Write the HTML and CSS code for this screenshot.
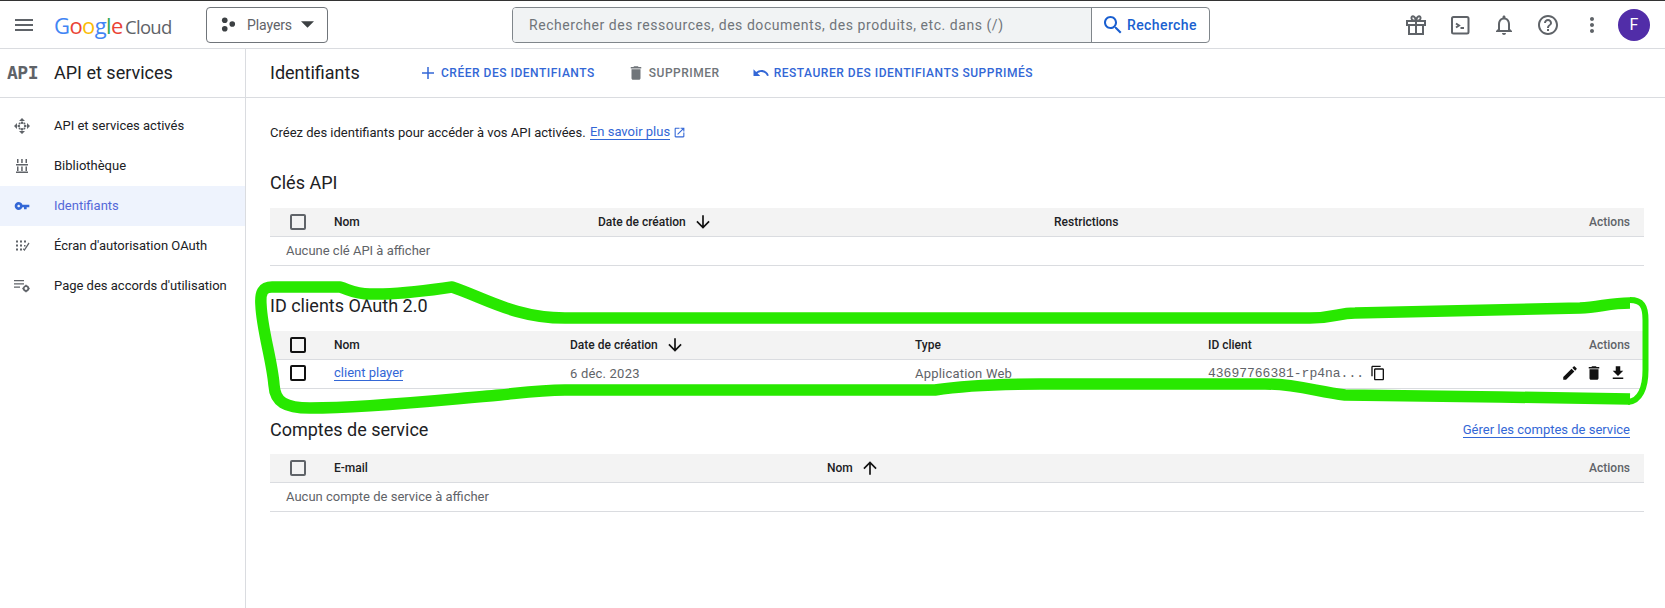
FILE: index.html
```html
<!DOCTYPE html>
<html lang="fr">
<head>
    <meta charset="UTF-8">
    <meta name="viewport" content="width=device-width, initial-scale=1.0">
    <title>Identifiants - API et services</title>
    <link rel="stylesheet" href="styles.css">
</head>
<body>
    <header class="topbar">
      <svg class="icon menu-icon" viewBox="0 0 24 24"><path d="M3 18h18v-2H3v2zm0-5h18v-2H3v2zm0-7v2h18V6H3z"/></svg>
      <div class="logo">
        <span class="logo-google"><span class="c-blue">G</span><span class="c-red">o</span><span class="c-yellow">o</span><span class="c-blue">g</span><span class="c-green">l</span><span class="c-red">e</span></span>
        <span class="logo-cloud">Cloud</span>
      </div>
      <button class="project">
        <svg class="project-dots" viewBox="0 0 16 16"><circle cx="4" cy="3.500" r="3"/><circle cx="12" cy="7.500" r="3"/><circle cx="4" cy="12.500" r="3"/></svg>
        <span>Players</span>
        <svg class="project-caret" viewBox="0 0 12 6"><path d="M0 0l6 6 6-6z"/></svg>
      </button>
      <div class="search">
        <div class="search-input">Rechercher des ressources, des documents, des produits, etc. dans (/)</div>
        <div class="search-btn">
          <svg class="icon" viewBox="0 0 24 24"><path d="M15.500 14h-.79l-.28-.27C15.410 12.590 16 11.110 16 9.500 16 5.910 13.090 3 9.500 3S3 5.910 3 9.500 5.910 16 9.500 16c1.610 0 3.090-.59 4.230-1.570l.27.28v.79l5 4.990L20.490 19l-4.990-5zm-6 0C7.010 14 5 11.990 5 9.500S7.010 5 9.500 5 14 7.010 14 9.500 11.990 14 9.500 14z"/></svg>
          <span>Recherche</span>
        </div>
      </div>
      <div class="top-icons">
        <svg class="icon stroke-icon" viewBox="0 0 24 24"><path d="M3 8h18v4H3zM5 12v9h14v-9M12 8v13M12 8C9 8 7 7 7.500 4.500 8 2.500 11 2.500 12 8c1-5.500 4-5.500 4.500-3.500C17 7 15 8 12 8z"/></svg>
        <svg class="icon stroke-icon" viewBox="0 0 24 24"><rect x="4" y="4" width="16.500" height="16.500" rx="1.500"/><path d="M8 10.500l3 2-3 2M12.500 15h3.500"/></svg>
        <svg class="icon" viewBox="0 0 24 24"><path d="M12 22c1.100 0 2-.9 2-2h-4c0 1.100.9 2 2 2zm6-6v-5c0-3.070-1.630-5.640-4.500-6.320V4c0-.83-.67-1.500-1.500-1.500s-1.500.67-1.500 1.500v.68C7.640 5.360 6 7.920 6 11v5l-2 2v1h16v-1l-2-2zm-2 1H8v-6c0-2.480 1.510-4.500 4-4.500s4 2.020 4 4.500v6z"/></svg>
        <svg class="icon" viewBox="0 0 24 24"><path d="M11 18h2v-2h-2v2zm1-16C6.480 2 2 6.480 2 12s4.480 10 10 10 10-4.480 10-10S17.520 2 12 2zm0 18c-4.410 0-8-3.590-8-8s3.590-8 8-8 8 3.590 8 8-3.590 8-8 8zm0-14c-2.210 0-4 1.790-4 4h2c0-1.100.9-2 2-2s2 .9 2 2c0 2-3 1.750-3 5h2c0-2.250 3-2.500 3-5 0-2.210-1.790-4-4-4z"/></svg>
        <svg class="icon" viewBox="0 0 24 24"><path d="M12 8c1.100 0 2-.9 2-2s-.9-2-2-2-2 .9-2 2 .9 2 2 2zm0 2c-1.100 0-2 .9-2 2s.9 2 2 2 2-.9 2-2-.9-2-2-2zm0 6c-1.100 0-2 .9-2 2s.9 2 2 2 2-.9 2-2-.9-2-2-2z"/></svg>
        <div class="avatar">F</div>
      </div>
    </header>

    <div class="layout">
      <aside class="sidebar">
        <div class="side-title">
          <span class="api-badge">API</span>
          <span>API et services</span>
        </div>
        <nav class="side-nav">
          <a class="side-item">
            <svg class="side-icon" viewBox="0 0 16 16"><path d="M8 0l3 3H5zM8 16l3-3H5zM0 8l3-3v6zM16 8l-3-3v6z"/><circle cx="8" cy="4.800" r="1.300"/><circle cx="8" cy="11.200" r="1.300"/><circle cx="4.800" cy="8" r="1.300"/><circle cx="11.200" cy="8" r="1.300"/><circle cx="5.600" cy="5.600" r="1"/><circle cx="10.400" cy="5.600" r="1"/><circle cx="5.600" cy="10.400" r="1"/><circle cx="10.400" cy="10.400" r="1"/></svg>
            <span>API et services activés</span>
          </a>
          <a class="side-item">
            <svg class="side-icon" viewBox="0 0 16 16"><path d="M3 1h1.500v4H3zM7.200 1h1.500v4H7.200zM11.500 1H13v4h-1.500zM2 6h12v1.500H2zM3 8.500h1.500V13H3zM7.200 8.500h1.500V13H7.200zM11.500 8.500H13V13h-1.500zM2 13.500h12V15H2z"/></svg>
            <span>Bibliothèque</span>
          </a>
          <a class="side-item active">
            <svg class="side-icon" viewBox="0 0 24 24"><path d="M12.650 10C11.830 7.670 9.610 6 7 6c-3.310 0-6 2.690-6 6s2.690 6 6 6c2.610 0 4.830-1.670 5.650-4H15v3h4v-3h4v-4H12.650zM7 14c-1.100 0-2-.9-2-2s.9-2 2-2 2 .9 2 2-.9 2-2 2z"/></svg>
            <span>Identifiants</span>
          </a>
          <a class="side-item">
            <svg class="side-icon" viewBox="0 0 16 16"><path d="M2 2.500h2v2H2zM6 2.500h2v2H6zM10 2.500h2v2h-2zM2 6.500h2v2H2zM6 6.500h2v2H6zM2 10.500h2v2H2zM6 10.500h2v2H6zM10 7h1.500v1.500H10z"/><path d="M14.500 4.500l1 1L10.500 13 8.800 11.200l1-1 .6.700z"/></svg>
            <span>Écran d'autorisation OAuth</span>
          </a>
          <a class="side-item">
            <svg class="side-icon" viewBox="0 0 16 16"><path d="M0 2h10v1.300H0zM0 5.200h10v1.300H0zM0 8.400h6v1.300H0z"/><circle class="gear" cx="12" cy="10.500" r="2.300"/><path d="M11.300 6.800h1.400v1.500h-1.400zM11.300 12.700h1.400v1.500h-1.400zM8.300 9.800h1.500v1.400H8.300zM14.200 9.800h1.500v1.400h-1.500z"/></svg>
            <span>Page des accords d'utilisation</span>
          </a>
        </nav>
      </aside>

      <main class="main">
        <div class="page-head">
          <h1>Identifiants</h1>
          <div class="actions">
            <a class="act blue act-create">
              <svg class="act-icon" viewBox="0 0 24 24"><path d="M20 13h-7v7h-2v-7H4v-2h7V4h2v7h7v2z"/></svg>
              <span>CRÉER DES IDENTIFIANTS</span>
            </a>
            <a class="act grey act-delete">
              <svg class="act-icon" viewBox="0 0 24 24"><path d="M6 19c0 1.100.9 2 2 2h8c1.100 0 2-.9 2-2V7H6v12zM19 4h-3.500l-1-1h-5l-1 1H5v2h14V4z"/></svg>
              <span>SUPPRIMER</span>
            </a>
            <a class="act blue">
              <svg class="act-icon" viewBox="0 0 24 24"><path d="M12.500 8c-2.650 0-5.050.99-6.900 2.600L2 7v9h9l-3.620-3.620c1.390-1.160 3.160-1.880 5.120-1.880 3.540 0 6.550 2.310 7.600 5.500l2.370-.78C21.080 11.030 17.150 8 12.500 8z"/></svg>
              <span>RESTAURER DES IDENTIFIANTS SUPPRIMÉS</span>
            </a>
          </div>
        </div>

        <div class="content">
          <p class="intro">Créez des identifiants pour accéder à vos API activées. <a class="link">En savoir plus</a>
            <svg class="ext-icon" viewBox="0 0 24 24"><path d="M19 19H5V5h7V3H5c-1.110 0-2 .9-2 2v14c0 1.100.89 2 2 2h14c1.100 0 2-.9 2-2v-7h-2v7zM14 3v2h3.590l-9.830 9.830 1.410 1.410L19 6.410V10h2V3h-7z"/></svg>
          </p>

          <section class="block block-keys">
            <h2>Clés API</h2>
            <div class="row head cols-keys">
              <span class="check check-grey"></span>
              <span>Nom</span>
              <span class="sort">Date de création
                <svg class="arrow" viewBox="0 0 24 24"><path d="M20 12l-1.410-1.410L13 16.170V4h-2v12.170l-5.580-5.590L4 12l8 8 8-8z"/></svg>
              </span>
              <span>Restrictions</span>
              <span class="col-actions">Actions</span>
            </div>
            <div class="row empty">Aucune clé API à afficher</div>
          </section>

          <section class="block">
            <h2>ID clients OAuth 2.0</h2>
            <div class="row head cols-oauth">
              <span class="check"></span>
              <span>Nom</span>
              <span class="sort">Date de création
                <svg class="arrow" viewBox="0 0 24 24"><path d="M20 12l-1.410-1.410L13 16.170V4h-2v12.170l-5.580-5.590L4 12l8 8 8-8z"/></svg>
              </span>
              <span>Type</span>
              <span>ID client</span>
              <span class="col-actions">Actions</span>
            </div>
            <div class="row cols-oauth data-row">
              <span class="check"></span>
              <a class="link cell-link">client player</a>
              <span>6 déc. 2023</span>
              <span>Application Web</span>
              <span class="client-id">43697766381-rp4na...
                <svg class="row-icon copy-icon" viewBox="0 0 24 24"><path d="M16 1H4c-1.100 0-2 .9-2 2v14h2V3h12V1zm3 4H8c-1.100 0-2 .9-2 2v14c0 1.100.9 2 2 2h11c1.100 0 2-.9 2-2V7c0-1.100-.9-2-2-2zm0 16H8V7h11v14z"/></svg>
              </span>
              <span class="row-actions">
                <svg class="row-icon" viewBox="0 0 24 24"><path d="M3 17.250V21h3.750L17.810 9.940l-3.750-3.750L3 17.250zM20.710 7.040c.39-.39.39-1.020 0-1.410l-2.340-2.340c-.39-.39-1.020-.39-1.410 0l-1.830 1.830 3.750 3.750 1.830-1.830z"/></svg>
                <svg class="row-icon" viewBox="0 0 24 24"><path d="M6 19c0 1.100.9 2 2 2h8c1.100 0 2-.9 2-2V7H6v12zM19 4h-3.500l-1-1h-5l-1 1H5v2h14V4z"/></svg>
                <svg class="row-icon" viewBox="0 0 24 24"><path d="M19 9h-4V3H9v6H5l7 7 7-7zM5 18v2h14v-2H5z"/></svg>
              </span>
            </div>
          </section>

          <section class="block">
            <div class="block-head">
              <h2>Comptes de service</h2>
              <a class="link">Gérer les comptes de service</a>
            </div>
            <div class="row head cols-service">
              <span class="check check-grey"></span>
              <span>E-mail</span>
              <span class="sort">Nom
                <svg class="arrow" viewBox="0 0 24 24"><path d="M4 12l1.410 1.410L11 7.830V20h2V7.830l5.580 5.590L20 12l-8-8-8 8z"/></svg>
              </span>
              <span class="col-actions">Actions</span>
            </div>
            <div class="row empty">Aucun compte de service à afficher</div>
          </section>
        </div>
      </main>
    </div>

    <!-- green marker scribbled over the screenshot -->
    <svg class="scribble" viewBox="0 0 1665 608">
      <path d="M1630 399 L1500 397 L1345 395 C1315 391 1295 384 1265 384 L1040 384 C1000 384 960 386 935 390 L565 390 C540 390 520 393 500 395 C440 400 370 408 310 408 C285 408 275 402 274 385 C272 360 262 330 261 305 C260 292 263 287 272 287 L340 287 C350 290 355 294 370 294 C400 295 430 290 452 287 C485 298 515 318 565 318 L1310 318 C1335 318 1338 313 1355 313 L1580 308 C1600 307 1610 303 1630 303"/>
      <path class="scribble-thin" d="M1630 300 C1642 300 1645.500 306 1645.500 320 L1645.500 370 C1645.500 388 1640 401 1628 402"/>
    </svg>
</body>
</html>
```

FILE: styles.css
```css
*{
  box-sizing: border-box;
}

html, body{
  margin: 0;
  height: 100%;
}

body{
  position: relative;
  height: 100vh;
  overflow: hidden;
  background-color: white;
  color: #202124;
  font-family: Roboto, "Liberation Sans", sans-serif;
  font-size: 13px;
}

svg{
  fill: currentColor;
  flex: none;
}

a{
  text-decoration: none;
}

h1, h2, p{
  margin: 0;
  font-weight: 400;
}

/* top bar */
.topbar{
  display: flex;
  align-items: center;
  height: 49px;
  border-top: 1px solid #333;
  border-bottom: 1px solid #dadce0;
  padding-left: 12px;
}

.icon{
  width: 24px;
  height: 24px;
  color: #5f6368;
}

.logo{
  display: flex;
  align-items: baseline;
  margin-left: 18px;
  width: 152px;
}

.logo-google{
  width: 71px;
  font-family: "Open Sans", Roboto, sans-serif;
  font-size: 22px;
  letter-spacing: -.6px;
}

.logo-cloud{
  color: #5f6368;
  font-family: "Open Sans", Roboto, sans-serif;
  font-size: 18.500px;
  letter-spacing: -.7px;
}

.c-blue{ color: #4285f4; }
.c-red{ color: #ea4335; }
.c-yellow{ color: #fbbc05; }
.c-green{ color: #34a853; }

.project{
  display: flex;
  align-items: center;
  width: 122px;
  height: 36px;
  padding: 0 0 0 14px;
  border: 1px solid #70757a;
  border-radius: 4px;
  background: white;
  color: #5f6368;
  font-family: inherit;
  font-size: 14px;
  letter-spacing: -.1px;
}

.project-dots{
  width: 15px;
  height: 15px;
  color: #3c4043;
  margin-right: 11px;
}

.project-caret{
  width: 13px;
  height: 7px;
  margin-left: 9px;
  color: #3c4043;
}

.search{
  display: flex;
  width: 698px;
  height: 36px;
  margin-left: 184px;
  border: 1px solid #80868b;
  border-radius: 4px;
  overflow: hidden;
}

.search-input{
  flex: 1;
  display: flex;
  align-items: center;
  padding-left: 16px;
  background-color: #f1f3f4;
  border-right: 1px solid #80868b;
  color: #70757a;
  font-size: 14px;
  letter-spacing: .55px;
}

.search-btn{
  display: flex;
  align-items: center;
  gap: 2px;
  width: 117px;
  padding-left: 9px;
  color: #1a5fd0;
  font-size: 14px;
  font-weight: 500;
  letter-spacing: .4px;
}

.search-btn .icon{
  width: 24px;
  height: 24px;
  color: #1a5fd0;
}

.top-icons{
  display: flex;
  align-items: center;
  gap: 20px;
  margin-left: 194px;
}

.stroke-icon{
  fill: none;
  stroke: currentColor;
  stroke-width: 2;
}

.avatar{
  display: flex;
  align-items: center;
  justify-content: center;
  width: 32px;
  height: 32px;
  margin-left: -6px;
  border-radius: 50%;
  background-color: #512da8;
  color: white;
  font-size: 16px;
}

/* page under the bar */
.layout{
  display: grid;
  grid-template-columns: 246px 1fr;
  height: calc(100vh - 49px);
}

.sidebar{
  border-right: 1px solid #dadce0;
}

.side-title{
  display: flex;
  align-items: center;
  height: 49px;
  border-bottom: 1px solid #dadce0;
  padding: 0 0 2px 7px;
  font-size: 18px;
}

.api-badge{
  width: 47px;
  color: #5f6368;
  font-family: "DejaVu Sans Mono", "Liberation Mono", monospace;
  font-size: 18px;
  font-weight: 700;
  letter-spacing: -.5px;
}

.side-nav{
  padding-top: 8px;
}

.side-item{
  display: flex;
  align-items: center;
  height: 40px;
  padding-left: 14px;
  color: #202124;
}

.side-item span{
  margin-bottom: 2px;
}

.side-icon{
  width: 16px;
  height: 16px;
  margin-right: 24px;
  color: #5f6368;
}

.side-item.active{
  background-color: #eef3fd;
  color: #5468d8;
}

.side-item.active .side-icon{
  color: #3367d6;
}

.gear{
  fill: none;
  stroke: currentColor;
  stroke-width: 1.700;
}

.page-head{
  display: flex;
  align-items: center;
  height: 49px;
  border-bottom: 1px solid #dadce0;
  padding: 0 0 2px 24px;
}

h1{
  width: 149px;
  font-size: 18px;
}

.actions{
  display: flex;
  align-items: center;
  margin-top: 2px;
}

.act{
  display: flex;
  align-items: center;
  gap: 4px;
  font-size: 12px;
  font-weight: 500;
  letter-spacing: .52px;
}

.act-create{
  margin-right: 32px;
}

.act-delete{
  margin-right: 32px;
}

.act-icon{
  width: 18px;
  height: 18px;
}

.blue{
  color: #3367d6;
}

.grey{
  color: #70757a;
}

.content{
  padding: 24px 21px 0 24px;
}

.intro{
  display: flex;
  align-items: center;
  gap: 1px;
  height: 20px;
  white-space: pre;
}

.link{
  color: #3367d6;
  border-bottom: 1px solid #3367d6;
  line-height: 15px;
}

.ext-icon{
  width: 13px;
  height: 13px;
  margin-left: 2px;
  color: #3367d6;
}

.block{
  margin-top: 28px;
}

.block-keys{
  margin-top: 29px;
}

h2{
  height: 24px;
  margin-bottom: 13px;
  font-size: 18px;
  line-height: 24px;
}

.block-head{
  display: flex;
  justify-content: space-between;
  padding: 1px 14px 0 0;
}

.block-head h2{
  margin-bottom: 12px;
}

.block-head .link{
  align-self: flex-start;
  margin-top: 4px;
}

.row{
  display: grid;
  align-items: center;
  height: 29px;
  padding-bottom: 2px;
  border-bottom: 1px solid #dadce0;
  color: #5f6368;
}

.data-row{
  letter-spacing: .2px;
}

.cell-link{
  justify-self: start;
  letter-spacing: 0;
}

.head{
  height: 29px;
  padding-bottom: 0;
  background-color: #f3f3f3;
  color: #202124;
  font-size: 12px;
  font-weight: 500;
}

.cols-keys{
  grid-template-columns: 64px 264px 456px 1fr 120px;
}

.cols-oauth{
  grid-template-columns: 64px 236px 345px 293px 1fr 120px;
}

.cols-service{
  grid-template-columns: 64px 493px 1fr 120px;
}

.check{
  display: block;
  justify-self: start;
  width: 16px;
  height: 16px;
  margin-left: 20px;
  border: 2px solid #111;
  border-radius: 2px;
}

.check-grey{
  border-color: #5f6368;
}

.sort{
  display: flex;
  align-items: center;
  gap: 7px;
}

.arrow{
  width: 20px;
  height: 20px;
  color: #111;
}

.col-actions{
  justify-self: end;
  padding-right: 14px;
  color: #5f6368;
}

.empty{
  padding-left: 16px;
}

.client-id{
  display: flex;
  align-items: center;
  gap: 6px;
  font-family: "Liberation Mono", monospace;
  letter-spacing: 0;
  white-space: nowrap;
}

.row-icon{
  width: 18px;
  height: 18px;
  color: #111;
}

.copy-icon{
  width: 16px;
  height: 16px;
}

.row-actions{
  display: flex;
  justify-self: end;
  gap: 6px;
  padding-right: 17px;
}

/* marker drawing, lies on top of everything */
.scribble{
  position: absolute;
  top: 0;
  left: 0;
  width: 1665px;
  height: 608px;
  fill: none;
  stroke: #28e800;
  stroke-width: 11.500;
  stroke-linejoin: round;
  pointer-events: none;
}

.scribble-thin{
  stroke-width: 6px;
}
```
